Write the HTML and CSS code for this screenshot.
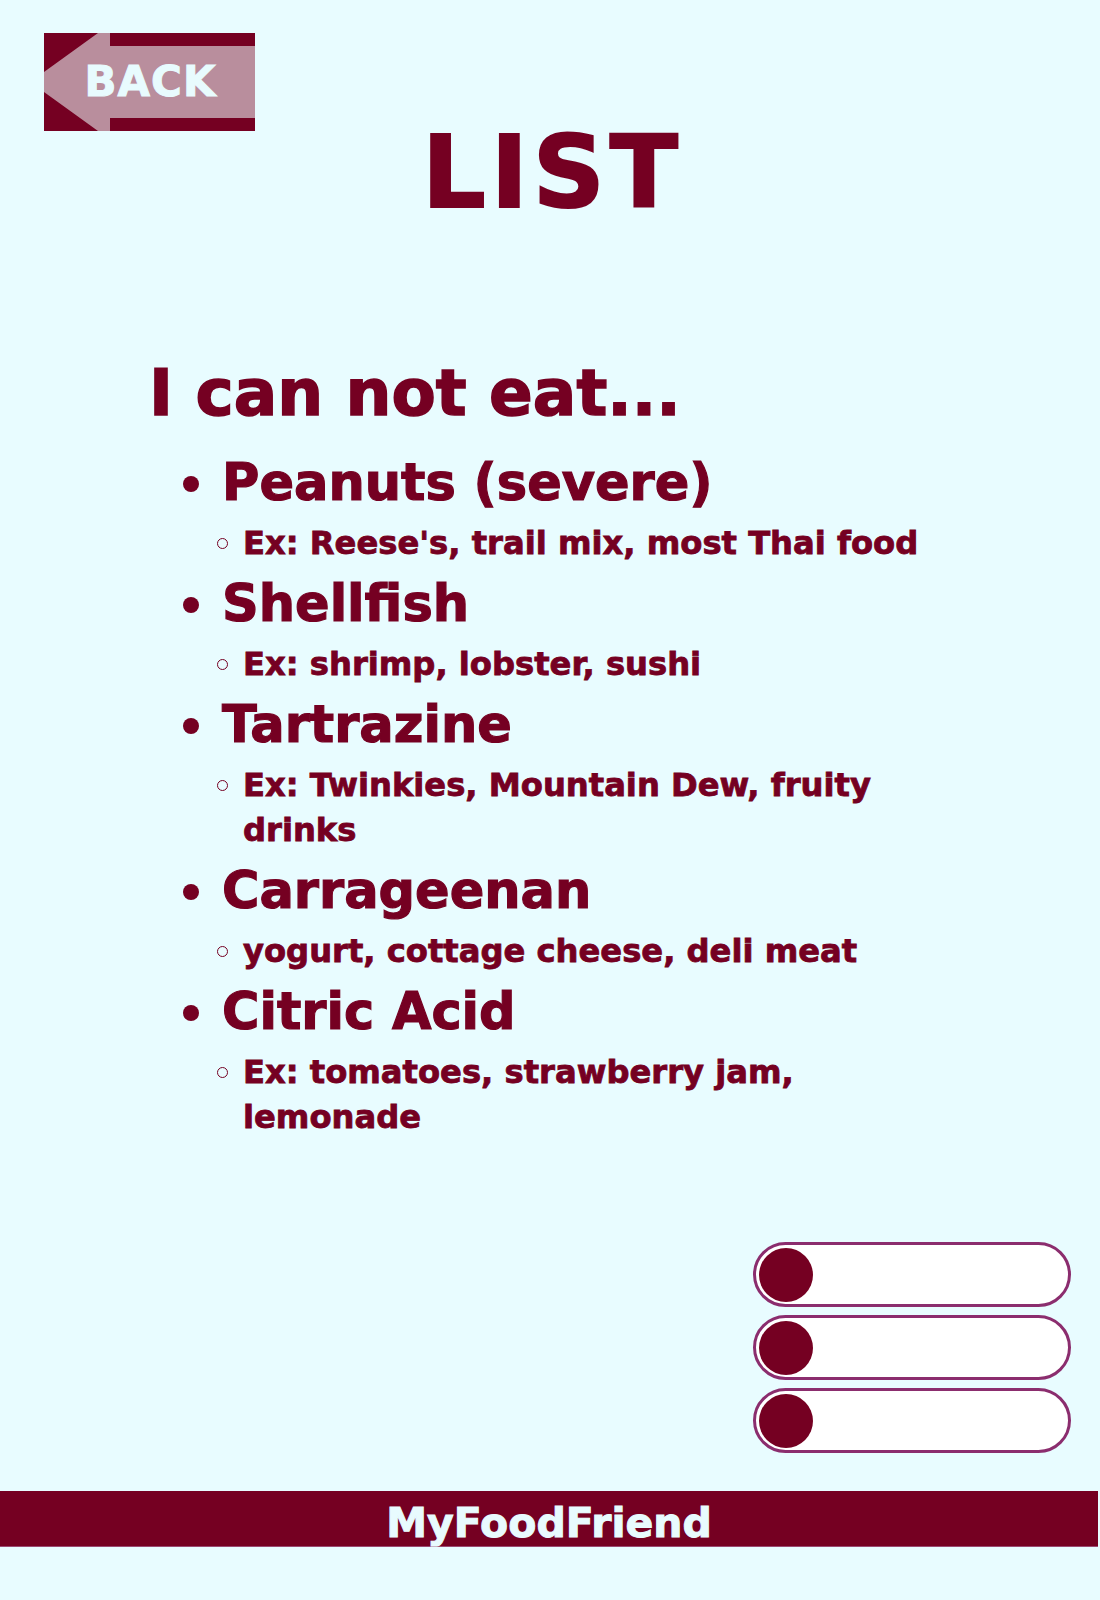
FILE: index.html
```html
<!DOCTYPE html>
<html lang="en">
<head>
<meta charset="utf-8">
<title>LIST - MyFoodFriend</title>
<link rel="stylesheet" href="styles.css">
</head>
<body>
<header class="top">
  <a class="back" href="#"><span class="back-label">BACK</span></a>
  <h1 class="title">LIST</h1>
</header>
<main class="content">
  <h2 class="lead">I can not eat...</h2>
  <ul class="items">
    <li class="item">Peanuts (severe)
      <ul class="sub"><li class="sub-item">Ex: Reese's, trail mix, most Thai food</li></ul>
    </li>
    <li class="item">Shellfish
      <ul class="sub"><li class="sub-item">Ex: shrimp, lobster, sushi</li></ul>
    </li>
    <li class="item">Tartrazine
      <ul class="sub"><li class="sub-item">Ex: Twinkies, Mountain Dew, fruity drinks</li></ul>
    </li>
    <li class="item">Carrageenan
      <ul class="sub"><li class="sub-item">yogurt, cottage cheese, deli meat</li></ul>
    </li>
    <li class="item">Citric Acid
      <ul class="sub"><li class="sub-item">Ex: tomatoes, strawberry jam, lemonade</li></ul>
    </li>
  </ul>
</main>
<section class="toggles">
  <div class="toggle"><span class="knob"></span></div>
  <div class="toggle"><span class="knob"></span></div>
  <div class="toggle"><span class="knob"></span></div>
</section>
<footer class="footer">MyFoodFriend</footer>
</body>
</html>
```
FILE: styles.css
```css
html, body {
  margin: 0;
  padding: 0;
}
body {
  background: #e8fcff;
  color: #750022;
  font-family: "DejaVu Sans", "Liberation Sans", sans-serif;
  font-weight: bold;
  width: 1100px;
  min-height: 1600px;
}
.top {
  padding: 33px 0 0 44px;
}
.back {
  position: relative;
  display: flex;
  align-items: center;
  justify-content: center;
  width: 211px;
  height: 98px;
  background: #750022;
  text-decoration: none;
}
.back::before {
  content: "";
  position: absolute;
  inset: 0;
  background: #b98e9d;
  clip-path: polygon(0 39px, 54px 0, 66px 0, 66px 13px, 211px 13px, 211px 85px, 66px 85px, 66px 98px, 54px 98px, 0 59px);
}
.back-label {
  position: relative;
  color: #e8fbfe;
  font-size: 42px;
  line-height: 1;
  letter-spacing: 1px;
  margin-left: 2px;
  -webkit-text-stroke: 1px #e8fbfe;
}
.title {
  margin: 0 0 0 -44px;
  padding-left: 5px;
  text-align: center;
  font-size: 100px;
  line-height: 84px;
  letter-spacing: 5px;
  font-weight: bold;
  -webkit-text-stroke: 2px #750022;
}
.content {
  padding: 0 155px 0 149px;
}
.lead {
  margin: 140px 0 0;
  font-size: 64.5px;
  line-height: 76px;
  font-weight: bold;
  -webkit-text-stroke: 1.5px #750022;
}
.items {
  list-style: none;
  margin: 14px 0 0;
  padding: 0 0 0 73px;
}
.item {
  font-size: 51px;
  line-height: 76px;
  -webkit-text-stroke: 1.2px #750022;
}
.item::before {
  content: "";
  display: inline-block;
  width: 16px;
  height: 16px;
  border-radius: 50%;
  background: #750022;
  margin-left: -39px;
  margin-right: 23px;
  vertical-align: 8px;
}
.sub {
  list-style: none;
  margin: 0;
  padding: 0 0 0 21px;
}
.sub-item {
  font-size: 32.2px;
  line-height: 45px;
  -webkit-text-stroke: 0.8px #750022;
}
.sub-item::before {
  content: "";
  display: inline-block;
  box-sizing: border-box;
  width: 11px;
  height: 11px;
  border: 1.5px solid #750022;
  border-radius: 50%;
  margin-left: -26px;
  margin-right: 15px;
  vertical-align: 5px;
}
.toggles {
  display: flex;
  flex-direction: column;
  align-items: flex-end;
  gap: 8px;
  margin-top: 102px;
  padding-right: 29px;
}
.toggle {
  box-sizing: border-box;
  display: flex;
  align-items: center;
  width: 318px;
  height: 65px;
  padding-left: 3px;
  background: #ffffff;
  border: 3px solid #8b2d6e;
  border-radius: 33px;
}
.knob {
  width: 54px;
  height: 54px;
  border-radius: 50%;
  background: #750022;
}
.footer {
  margin: 38px 2px 0 0;
  height: 56px;
  box-sizing: border-box;
  padding: 12px 0 3px;
  background: #750022;
  border-bottom: 1px solid #9b4a72;
  color: #e8fbfe;
  text-align: center;
  font-size: 41px;
  line-height: 41px;
  -webkit-text-stroke: 1px #e8fbfe;
}
```
